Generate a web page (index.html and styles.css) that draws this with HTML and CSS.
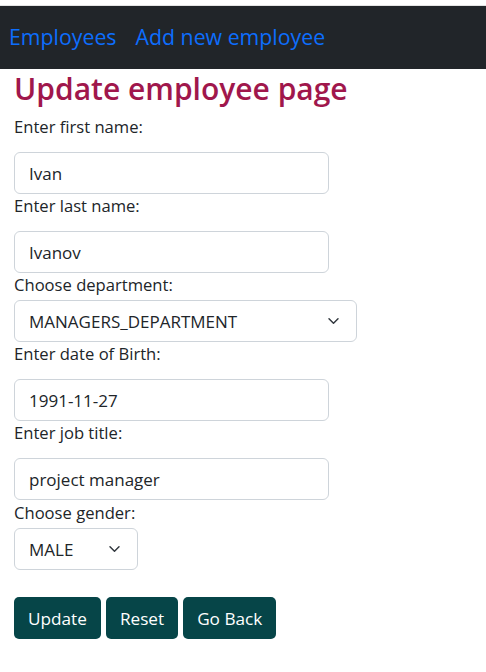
FILE: index.html
```html
<!DOCTYPE html>
<html lang="en">
<head>
<meta charset="utf-8">
<title>Update employee</title>
<link rel="stylesheet" href="styles.css">
</head>
<body>
<nav class="navbar">
  <a class="nav-link" href="#">Employees</a>
  <a class="nav-link" href="#">Add new employee</a>
</nav>
<main class="page">
  <h1 class="title">Update employee page</h1>
  <form class="form">
    <label class="field-label" for="fn">Enter first name:</label>
    <input class="text-input" id="fn" type="text" value="Ivan">
    <label class="field-label" for="ln">Enter last name:</label>
    <input class="text-input" id="ln" type="text" value="Ivanov">
    <label class="field-label" for="dep">Choose department:</label>
    <select class="select select-wide" id="dep">
      <option>MANAGERS_DEPARTMENT</option>
    </select>
    <label class="field-label" for="dob">Enter date of Birth:</label>
    <input class="text-input" id="dob" type="text" value="1991-11-27">
    <label class="field-label" for="jt">Enter job title:</label>
    <input class="text-input" id="jt" type="text" value="project manager">
    <label class="field-label label-gender" for="g">Choose gender:</label>
    <select class="select select-small" id="g">
      <option>MALE</option>
    </select>
    <div class="actions">
      <button class="btn" type="submit">Update</button>
      <button class="btn" type="reset">Reset</button>
      <button class="btn" type="button">Go Back</button>
    </div>
  </form>
</main>
</body>
</html>
```
FILE: styles.css
```css
* { box-sizing: border-box; }
html, body { margin: 0; padding: 0; }
body {
  font-family: "Open Sans", "Noto Sans", sans-serif;
  color: #212529;
  background: #fff;
  padding-top: 5px;
}
.navbar {
  background: #212529;
  border-top: 1px solid #e4e4e4;
  height: 64px;
  display: flex;
  align-items: center;
  gap: 19px;
  padding: 0 0 2px 9px;
}
.nav-link {
  color: #0d6efd;
  text-decoration: none;
  font-size: 21.3px;
}
.page { padding: 0 14px; }
.title {
  margin: 0;
  font-size: 30px;
  font-weight: 600;
  line-height: 40px;
  color: #a0174c;
}
.form {
  display: flex;
  flex-direction: column;
  align-items: flex-start;
  margin-top: 6px;
}
.field-label {
  font-size: 16.6px;
  line-height: 24px;
  height: 24px;
}
.label-gender { margin-top: 1px; }
.text-input, .select {
  font-family: inherit;
  font-size: 17px;
  color: #212529;
  height: 42px;
  border: 1px solid #ced4da;
  border-radius: 6px;
  background-color: #fff;
  padding: 0 14px;
}
.text-input {
  width: 315px;
  margin: 13px 0 0;
}
.select {
  margin: 3px 0 0;
  appearance: none;
  -webkit-appearance: none;
  background-image: url("data:image/svg+xml,%3csvg xmlns='http://www.w3.org/2000/svg' viewBox='0 0 16 16'%3e%3cpath fill='none' stroke='%23343a40' stroke-linecap='round' stroke-linejoin='round' stroke-width='2' d='m2 5 6 6 6-6'/%3e%3c/svg%3e");
  background-repeat: no-repeat;
  background-position: right 15px center;
  background-size: 15px 12px;
}
.select-wide { width: 343px; }
.select-small { width: 124px; }
.actions {
  display: flex;
  gap: 5px;
  margin-top: 27px;
}
.btn {
  font-family: inherit;
  font-size: 17.2px;
  color: #fff;
  background: #064548;
  border: none;
  border-radius: 5px;
  height: 42px;
  padding: 0 14px;
}
```
